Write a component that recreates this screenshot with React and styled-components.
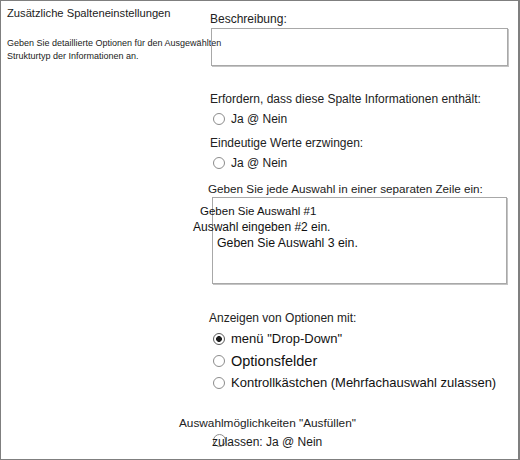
import React from "react";
import styled, { createGlobalStyle } from "styled-components";

const GlobalStyle = createGlobalStyle`
  html, body {
    margin: 0;
    padding: 0;
    background: #fff;
  }
  body {
    font-family: "Liberation Sans", Arial, sans-serif;
    color: #1f1f1f;
  }
`;

function Radio({ checked, size = 12, lift = 0 }) {
  return <RadioCircle $checked={checked} $size={size} $lift={lift} />;
}

export default function App() {
  return (
    <>
      <GlobalStyle />
      <Frame>
        <InfoColumn>
          <SectionTitle>Zusätzliche Spalteneinstellungen</SectionTitle>
          <SectionHint>
            Geben Sie detaillierte Optionen für den Ausgewählten
            <br />
            Strukturtyp der Informationen an.
          </SectionHint>
        </InfoColumn>

        <FieldColumn>
          <FieldLabel $top={10}>Beschreibung:</FieldLabel>
          <TextBox $top={1} $shift={1} $width={297} $height={38} />

          <FieldLabel $top={25}>
            Erfordern, dass diese Spalte Informationen enthält:
          </FieldLabel>
          <ChoiceRow $top={4}>
            <Radio />
            <ChoiceText>Ja @ Nein</ChoiceText>
          </ChoiceRow>

          <FieldLabel $top={8}>Eindeutige Werte erzwingen:</FieldLabel>
          <ChoiceRow $top={4}>
            <Radio />
            <ChoiceText>Ja @ Nein</ChoiceText>
          </ChoiceRow>

          <FieldLabel $top={10} $shift={-2} $size={11.7}>
            Geben Sie jede Auswahl in einer separaten Zeile ein:
          </FieldLabel>
          <TextBox $top={0} $shift={2} $width={295} $height={87}>
            <EntryLine $shift={-13} $size={11.5}>
              Geben Sie Auswahl #1
            </EntryLine>
            <EntryLine $shift={-20}>Auswahl eingeben #2 ein.</EntryLine>
            <EntryLine $shift={4} $size={12.3}>
              Geben Sie Auswahl 3 ein.
            </EntryLine>
          </TextBox>

          <FieldLabel $top={26} $shift={-1}>
            Anzeigen von Optionen mit:
          </FieldLabel>
          <OptionList>
            <OptionRow>
              <Radio checked />
              <OptionText $size={13}>menü "Drop-Down"</OptionText>
            </OptionRow>
            <OptionRow>
              <Radio />
              <OptionText $size={14.5}>Optionsfelder</OptionText>
            </OptionRow>
            <OptionRow>
              <Radio />
              <OptionText $size={13}>
                Kontrollkästchen (Mehrfachauswahl zulassen)
              </OptionText>
            </OptionRow>
          </OptionList>

          <FieldLabel $top={21} $shift={-31} $size={11.8}>
            Auswahlmöglichkeiten "Ausfüllen"
          </FieldLabel>
          <ChoiceRow $top={3}>
            <Radio size={13} lift={2} />
            <OverlapText>zulassen: Ja @ Nein</OverlapText>
          </ChoiceRow>
        </FieldColumn>
      </Frame>
    </>
  );
}

const Frame = styled.div`
  box-sizing: border-box;
  width: 520px;
  height: 460px;
  border: 1px solid #7f7f7f;
  border-right-width: 2px;
  display: grid;
  grid-template-columns: 209px 1fr;
  overflow: hidden;
`;

const InfoColumn = styled.div`
  padding: 4px 0 0 6px;
  display: flex;
  flex-direction: column;
  white-space: nowrap;
`;

const SectionTitle = styled.div`
  font-size: 11.2px;
  line-height: 16px;
  color: #222;
`;

const SectionHint = styled.div`
  margin-top: 16px;
  font-size: 9px;
  line-height: 13px;
  color: #222;
`;

const FieldColumn = styled.div`
  display: flex;
  flex-direction: column;
  align-items: flex-start;
  white-space: nowrap;
`;

const FieldLabel = styled.div`
  margin-top: ${(p) => p.$top || 0}px;
  margin-left: ${(p) => p.$shift || 0}px;
  font-size: ${(p) => p.$size || 12}px;
  line-height: 16px;
  color: #222;
`;

const TextBox = styled.div`
  box-sizing: border-box;
  margin-top: ${(p) => p.$top || 0}px;
  margin-left: ${(p) => p.$shift || 0}px;
  width: ${(p) => p.$width}px;
  height: ${(p) => p.$height}px;
  border: 1px solid #a8a8a8;
  box-shadow: 1px 1px 0 #c4c4c4;
  padding: 5px 0 0 0;
  display: flex;
  flex-direction: column;
`;

const EntryLine = styled.div`
  margin-left: ${(p) => p.$shift}px;
  font-size: ${(p) => p.$size || 12}px;
  line-height: 16px;
  color: #111;
`;

const ChoiceRow = styled.div`
  margin-top: ${(p) => p.$top || 0}px;
  margin-left: 3px;
  height: 16px;
  display: flex;
  align-items: center;
  gap: 6px;
`;

const ChoiceText = styled.span`
  font-size: 12px;
  line-height: 16px;
  color: #1a1a1a;
`;

const OverlapText = styled(ChoiceText)`
  margin-left: -20px;
  position: relative;
`;

const OptionList = styled.div`
  margin-top: 2px;
  margin-left: 3px;
  display: flex;
  flex-direction: column;
`;

const OptionRow = styled.div`
  height: 22px;
  display: flex;
  align-items: center;
  gap: 6px;
`;

const OptionText = styled.span`
  font-size: ${(p) => p.$size}px;
  line-height: 22px;
  color: #111;
`;

const RadioCircle = styled.span`
  box-sizing: border-box;
  flex: none;
  width: ${(p) => p.$size}px;
  height: ${(p) => p.$size}px;
  margin-top: ${(p) => -2 * p.$lift}px;
  border-radius: 50%;
  border: 1px solid ${(p) => (p.$checked ? "#5a5a5a" : "#8c8c8c")};
  background: ${(p) =>
    p.$checked
      ? "radial-gradient(circle, #1e1e1e 0 2.6px, #fff 3.2px)"
      : "#fff"};
`;
